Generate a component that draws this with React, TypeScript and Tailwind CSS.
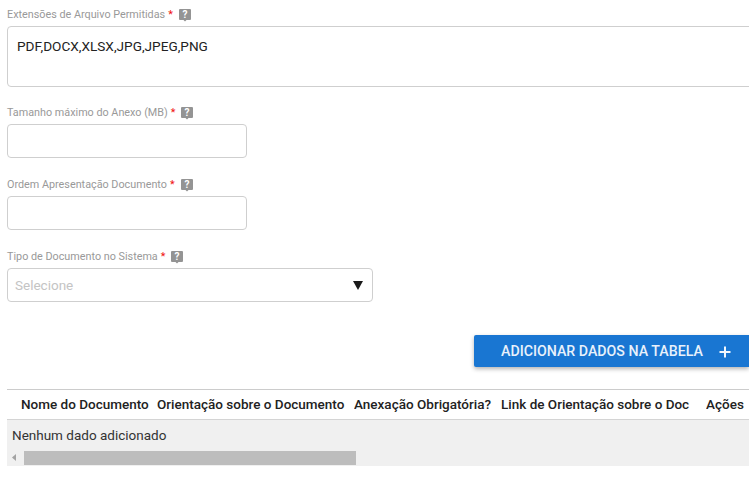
import React from "react";

const HelpIcon = () => (
  <svg width="12" height="13" viewBox="0 0 12 13" className="ml-[6px] shrink-0">
    <path d="M1 0h10a1 1 0 0 1 1 1v9a1 1 0 0 1-1 1H7.500L6 12.500 4.500 11H1a1 1 0 0 1-1-1V1a1 1 0 0 1 1-1z" fill="#949494" />
    <text x="6" y="9" textAnchor="middle" fontSize="10" fontWeight="700" fill="#fff" fontFamily="Roboto, sans-serif">?</text>
  </svg>
);

const Label = ({ text }: { text: string }) => (
  <div className="flex items-center h-[14px] mb-[4px] text-[10.8px] leading-[14px] text-[#999999]">
    <span>{text}</span>
    <span className="ml-[3px] text-[#f01010]">*</span>
    <HelpIcon />
  </div>
);

const headers = [
  { name: "Nome do Documento", width: "w-[136px]" },
  { name: "Orientação sobre o Documento", width: "w-[197px]" },
  { name: "Anexação Obrigatória?", width: "w-[147px]" },
  { name: "Link de Orientação sobre o Doc", width: "w-[205px]" },
  { name: "Ações", width: "w-[43px]" },
];

const App = () => {
  return (
    <div className="w-[749px] h-[477px] overflow-hidden bg-white font-['Roboto',sans-serif] pl-[7px] pt-[8px]">
      <Label text="Extensões de Arquivo Permitidas" />
      <div className="w-[760px] h-[61px] border border-[#cfcfcf] rounded-[4px] pl-[9px] pt-[10px] text-[13.6px] leading-[18px] text-[#222]">
        PDF,DOCX,XLSX,JPG,JPEG,PNG
      </div>

      <div className="mt-[19px]">
        <Label text="Tamanho máximo do Anexo (MB)" />
        <div className="w-[240px] h-[34px] border border-[#cfcfcf] rounded-[4px]" />
      </div>

      <div className="mt-[20px]">
        <Label text="Ordem Apresentação Documento" />
        <div className="w-[240px] h-[34px] border border-[#cfcfcf] rounded-[4px]" />
      </div>

      <div className="mt-[20px]">
        <Label text="Tipo de Documento no Sistema" />
        <div className="flex items-center justify-between w-[366px] h-[34px] border border-[#cfcfcf] rounded-[4px] pl-[7px] pr-[9px]">
          <span className="text-[13.5px] text-[#c4c4c4]">Selecione</span>
          <svg width="10" height="10" viewBox="0 0 10 10">
            <path d="M0 1h10L5 10z" fill="#1a1a1a" />
          </svg>
        </div>
      </div>

      <div className="flex justify-end mt-[33px]">
        <button className="flex items-center w-[275px] h-[32px] bg-[#1976d2] rounded-l-[2px] pl-[27px] pt-[1px] text-[14.2px] font-medium text-[#e8f1fb] shadow-[0_2px_4px_rgba(0,0,0,0.3)]">
          ADICIONAR DADOS NA TABELA
          <svg width="12" height="12" viewBox="0 0 12 12" className="ml-[16px]">
            <path d="M6 0.500v11M0.500 6h11" stroke="#f2f7fd" strokeWidth="2" />
          </svg>
        </button>
      </div>

      <div className="mt-[22px] border-t border-[#cccccc] w-[742px]">
        <div className="flex h-[30px] items-center pl-[14px] text-[13.5px] font-medium text-[#222] whitespace-nowrap border-b border-[#d4d4d4]">
          {headers.map((h) => (
            <div key={h.name} className={`${h.width} shrink-0 overflow-hidden`}>
              {h.name}
            </div>
          ))}
        </div>
        <div className="bg-[#f0f0f0] h-[46px]">
          <div className="h-[30px] pl-[5px] pt-[6px] text-[13.5px] leading-[18px] text-[#333]">
            Nenhum dado adicionado
          </div>
          <div className="flex items-center h-[15px]">
            <svg width="17" height="15" viewBox="0 0 17 15" className="shrink-0">
              <path d="M5 7.500L9 4v7z" fill="#a3a3a3" />
            </svg>
            <div className="w-[332px] h-[14px] bg-[#bdbdbd]" />
          </div>
        </div>
      </div>
    </div>
  );
};

export default App;
